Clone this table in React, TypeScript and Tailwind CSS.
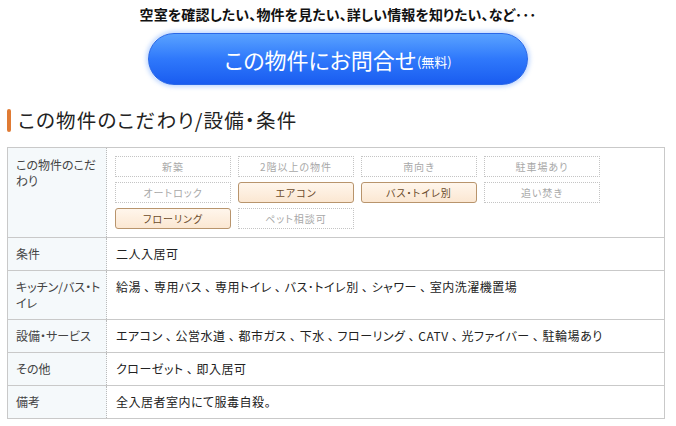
import React from "react";

const font = { fontFamily: '"Noto Sans CJK JP", "Noto Sans", sans-serif', fontFeatureSettings: '"palt"' } as React.CSSProperties;

const tags: { t: string; on: boolean }[] = [
  { t: "新築", on: false },
  { t: "2階以上の物件", on: false },
  { t: "南向き", on: false },
  { t: "駐車場あり", on: false },
  { t: "オートロック", on: false },
  { t: "エアコン", on: true },
  { t: "バス・トイレ別", on: true },
  { t: "追い焚き", on: false },
  { t: "フローリング", on: true },
  { t: "ペット相談可", on: false },
];

const rows: { label: React.ReactNode; key: string; value: string; h: string }[] = [
  { key: "a", label: "条件", value: "二人入居可", h: "h-[33px]" },
  {
    key: "b",
    label: (
      <>
        キッチン/バス・ト
        <br />
        イレ
      </>
    ),
    value: "給湯 、 専用バス 、 専用トイレ 、 バス･トイレ別 、 シャワー 、 室内洗濯機置場",
    h: "h-[49px]",
  },
  { key: "c", label: "設備・サービス", value: "エアコン 、 公営水道 、 都市ガス 、 下水 、 フローリング 、 CATV 、 光ファイバー 、 駐輪場あり", h: "h-[33px]" },
  { key: "d", label: "その他", value: "クローゼット 、 即入居可", h: "h-[33px]" },
  { key: "e", label: "備考", value: "全入居者室内にて服毒自殺。", h: "h-[32px]" },
];

export default function App() {
  return (
    <div className="w-[676px] h-[426px] bg-white overflow-hidden text-[#333]" style={font}>
      <div className="h-[31px] flex items-center justify-center pb-[2px]">
        <span className="text-[14px] font-bold text-[#111] tracking-[0.1px]">空室を確認したい、物件を見たい、詳しい情報を知りたい、など･･･</span>
      </div>
      <div className="flex justify-center mt-[2px]">
        <div className="w-[380px] h-[52px] rounded-full flex items-center justify-center border border-[#2a68e8] bg-gradient-to-b from-[#5aa2ff] via-[#2f78fb] to-[#1a5cf0] shadow-[0_0_4px_2px_rgba(120,170,255,0.45)]">
          <span className="text-white text-[22px] leading-none">この物件にお問合せ</span>
          <span className="text-white text-[13px] leading-none mt-[4px] ml-[1px]">(無料)</span>
        </div>
      </div>
      <div className="flex items-center mt-[23px] ml-[7px] h-[24px]">
        <div className="w-[4px] h-[23px] rounded-[2px] bg-[#e07b34]" />
        <span className="ml-[7px] text-[19.5px] leading-none tracking-[1.2px] text-[#222]">この物件のこだわり/設備・条件</span>
      </div>
      <div className="mt-[15px] ml-[7px] w-[658px] border border-[#c9c9c9] text-[12px] leading-[16px]">
        <div className="flex h-[90px] border-b border-[#c9c9c9]">
          <div className="w-[99px] shrink-0 bg-[#f5f9fb] border-r border-dotted border-[#bbb] pl-[8px] pt-[9px] text-[#444] whitespace-nowrap">
            この物件のこだ
            <br />
            わり
          </div>
          <div className="pl-[8px] pt-[8px]">
            <div className="grid grid-cols-[116px_116px_116px_116px] gap-x-[7px] gap-y-[5px]">
              {tags.map((g) => (
                <div
                  key={g.t}
                  className={
                    g.on
                      ? "h-[21px] flex items-center justify-center rounded-[3px] border border-[#b8946c] bg-gradient-to-b from-[#fff6ec] to-[#fbe7d2] text-[10px] text-[#6b4a2a] tracking-[1px]"
                      : "h-[21px] flex items-center justify-center border border-dotted border-[#c4c4c4] text-[10px] text-[#a8a8a8] tracking-[1px]"
                  }
                >
                  {g.t}
                </div>
              ))}
            </div>
          </div>
        </div>
        {rows.map((r, i) => (
          <div key={r.key} className={`flex ${r.h} ${i < rows.length - 1 ? "border-b border-[#c9c9c9]" : ""}`}>
            <div className="w-[99px] shrink-0 bg-[#f5f9fb] border-r border-dotted border-[#bbb] pl-[8px] pt-[8px] text-[#444] whitespace-nowrap">{r.label}</div>
            <div className="pl-[9px] pt-[8px] text-[#222] tracking-[0.5px]">{r.value}</div>
          </div>
        ))}
      </div>
    </div>
  );
}
